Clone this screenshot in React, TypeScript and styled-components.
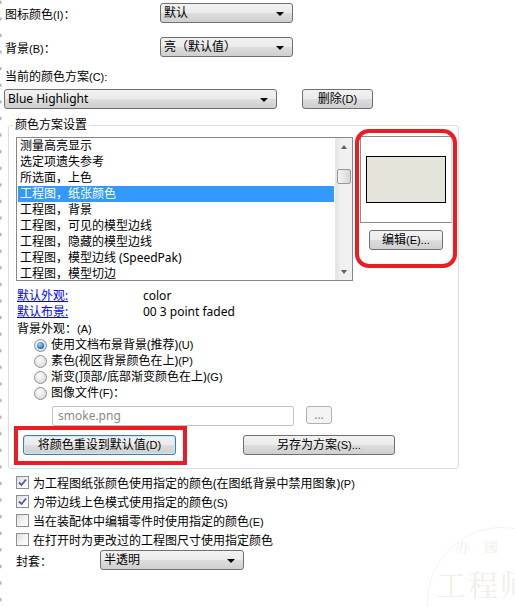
import React from "react";
import styled, { createGlobalStyle, css } from "styled-components";

const Global = createGlobalStyle`
  html, body { margin: 0; padding: 0; background: #fff; }
  body {
    font-family: "Noto Sans", "Noto Sans CJK SC", sans-serif;
    font-size: 12px;
    color: #000;
  }
  * { box-sizing: border-box; }
`;

const Page = styled.div`
  position: relative;
  width: 515px;
  height: 607px;
  overflow: hidden;
  padding-top: 3px;
  background-image: radial-gradient(circle at 0 50%, #b8b8b8 1.4px, transparent 2.2px);
  background-size: 4px 16.6px;
  background-repeat: repeat-y;
  background-position: 0 -6px;
`;

const Key = styled.span`
  font-family: "Liberation Sans", "Noto Sans CJK SC", sans-serif;
  font-size: 11px;
`;

const Row = styled.div<{ $mt?: number }>`
  display: flex;
  align-items: center;
  height: 20px;
  margin-top: ${(p) => p.$mt ?? 0}px;
`;

const RowLabel = styled.div<{ $w: number; $ml?: number }>`
  width: ${(p) => p.$w}px;
  margin-left: ${(p) => p.$ml ?? 5}px;
  white-space: nowrap;
  line-height: 20px;
  position: relative;
  top: 2px;
`;

const PlainLabel = styled.div<{ $mt: number }>`
  margin-left: 5px;
  margin-top: ${(p) => p.$mt}px;
  line-height: 18px;
  height: 18px;
`;

const win7Face = css`
  background: linear-gradient(#f2f2f2 0%, #ebebeb 48%, #dddddd 52%, #cfcfcf 100%);
  border: 1px solid #707070;
  border-radius: 3px;
`;

const SelectBox = styled.div<{ $w: number; $ml?: number }>`
  ${win7Face}
  width: ${(p) => p.$w}px;
  height: 20px;
  margin-left: ${(p) => p.$ml ?? 0}px;
  display: flex;
  align-items: center;
  padding-left: 3px;
  position: relative;
  white-space: nowrap;
  line-height: 18px;
  &::after {
    content: "";
    position: absolute;
    right: 8px;
    top: 8px;
    border-left: 4px solid transparent;
    border-right: 4px solid transparent;
    border-top: 4px solid #000;
  }
`;

const Button = styled.div<{ $w: number; $h?: number; $ml?: number; $mt?: number; $focus?: boolean; $disabled?: boolean }>`
  ${win7Face}
  width: ${(p) => p.$w}px;
  height: ${(p) => p.$h ?? 20}px;
  margin-left: ${(p) => p.$ml ?? 0}px;
  margin-top: ${(p) => p.$mt ?? 0}px;
  display: flex;
  align-items: center;
  justify-content: center;
  line-height: 18px;
  white-space: nowrap;
  position: relative;
  ${(p) =>
    p.$focus &&
    css`
      border-color: #3c7fb1;
      box-shadow: inset 0 0 0 1px #cbe7f7;
    `}
  ${(p) =>
    p.$disabled &&
    css`
      background: #f4f4f4;
      border-color: #adb2b5;
      color: #8a8a8a;
    `}
`;

const Annotated = styled.div<{ $t: number; $r: number; $b: number; $l: number; $radius: number }>`
  position: relative;
  &::after {
    content: "";
    position: absolute;
    top: ${(p) => -p.$t}px;
    right: ${(p) => -p.$r}px;
    bottom: ${(p) => -p.$b}px;
    left: ${(p) => -p.$l}px;
    border: 4px solid #ec1c24;
    border-radius: ${(p) => p.$radius}px;
    pointer-events: none;
  }
`;

const Group = styled.fieldset`
  margin: 8px 0 0 8px;
  width: 451px;
  min-width: 0;
  border: 1px solid #d5dfe5;
  border-radius: 3px;
  padding: 4px 0 13px 7px;
`;

const Legend = styled.legend`
  padding: 0 2px;
  margin-left: -3px;
  line-height: 16px;
  height: 16px;
`;

const TopArea = styled.div`
  display: flex;
  align-items: flex-start;
  gap: 7px;
`;

const ListBox = styled.div`
  width: 337px;
  height: 144px;
  border: 1px solid #828790;
  display: flex;
  overflow: hidden;
  background: #fff;
`;

const ListItems = styled.div`
  flex: 1;
  padding: 0 1px;
`;

const ListItem = styled.div<{ $sel?: boolean }>`
  height: 16px;
  line-height: 16px;
  padding-left: 2px;
  white-space: nowrap;
  background: ${(p) => (p.$sel ? "#3399ff" : "transparent")};
  color: ${(p) => (p.$sel ? "#fff" : "#000")};
`;

const ScrollBar = styled.div`
  width: 17px;
  background: linear-gradient(90deg, #e3e3e3, #f0f0f0 30%, #f0f0f0);
  border-left: 1px solid #e6e6e6;
  display: flex;
  flex-direction: column;
  align-items: center;
`;

const Arrow = styled.div<{ $down?: boolean }>`
  width: 0;
  height: 0;
  border-left: 3.5px solid transparent;
  border-right: 3.5px solid transparent;
  ${(p) =>
    p.$down
      ? css`
          border-top: 4px solid #606060;
          margin-top: auto;
          margin-bottom: 6px;
        `
      : css`
          border-bottom: 4px solid #606060;
          margin-top: 7px;
        `}
`;

const Thumb = styled.div`
  width: 14px;
  height: 15px;
  margin-top: 20px;
  border: 1px solid #979797;
  border-radius: 2px;
  background: linear-gradient(90deg, #f3f3f3, #e6e6e6 50%, #d6d6d6);
`;

const SwatchCol = styled.div`
  width: 92px;
  display: flex;
  flex-direction: column;
  align-items: center;
  margin-top: -1px;
`;

const SwatchPanel = styled.div`
  width: 92px;
  height: 87px;
  border: 1px solid #8c8c8c;
  border-right-color: #dcdcdc;
  display: flex;
  align-items: center;
  justify-content: center;
`;

const Swatch = styled.div`
  width: 80px;
  height: 47px;
  border: 1px solid #000;
  background: #e4e4da;
`;

const InfoRow = styled.div<{ $mt?: number }>`
  display: flex;
  height: 16px;
  line-height: 16px;
  margin-top: ${(p) => p.$mt ?? 0}px;
  margin-left: 1px;
`;

const Link = styled.span`
  width: 126px;
  color: #0000ff;
  text-decoration: underline;
`;

const RadioRow = styled.div`
  display: flex;
  align-items: center;
  height: 16px;
  line-height: 16px;
  padding-left: 18px;
  gap: 4px;
`;

const Radio = styled.span<{ $on?: boolean }>`
  width: 13px;
  height: 13px;
  border-radius: 50%;
  border: 1px solid #8e8f8f;
  background: radial-gradient(circle at 40% 35%, #ffffff, #dcdcdc 70%, #cfcfcf);
  display: inline-flex;
  align-items: center;
  justify-content: center;
  &::after {
    content: "";
    display: ${(p) => (p.$on ? "block" : "none")};
    width: 7px;
    height: 7px;
    border-radius: 50%;
    background: radial-gradient(circle at 40% 35%, #9fdcff, #2f78c8 60%, #1a4f93);
  }
`;

const FileRow = styled.div`
  display: flex;
  align-items: flex-start;
  margin-top: 5px;
  margin-left: 36px;
`;

const TextInput = styled.div`
  width: 242px;
  height: 20px;
  border: 1px solid #c2c2c2;
  border-radius: 2px;
  color: #8a8a8a;
  padding-left: 5px;
  line-height: 18px;
`;

const ButtonRow = styled.div`
  display: flex;
  margin-top: 9px;
  margin-left: 7px;
`;

const CheckList = styled.div`
  display: flex;
  flex-direction: column;
  margin-top: 4px;
  margin-left: 16px;
`;

const CheckRow = styled.div`
  display: flex;
  align-items: center;
  height: 19px;
  gap: 4px;
  white-space: nowrap;
`;

const Check = styled.span`
  width: 13px;
  height: 13px;
  border: 1px solid #8e8f8f;
  background: linear-gradient(135deg, #dcdcdc, #f6f6f6 60%, #ffffff);
  display: inline-flex;
  align-items: center;
  justify-content: center;
`;

const WrapRow = styled.div`
  display: flex;
  align-items: center;
  height: 20px;
  margin-top: 1px;
`;

const Watermark = styled.div`
  position: absolute;
  right: -62px;
  bottom: -70px;
  width: 150px;
  height: 150px;
  border-radius: 50%;
  border: 1px solid #f6f3f0;
  color: #f3eeea;
  font-family: "Noto Serif CJK SC", "Noto Sans CJK SC", serif;
  pointer-events: none;
`;

const WmBig = styled.div`
  position: absolute;
  left: 8px;
  top: 33px;
  font-size: 30px;
  letter-spacing: 2px;
  white-space: nowrap;
`;

const WmSmall = styled.div`
  position: absolute;
  left: 28px;
  top: 8px;
  font-size: 14px;
  letter-spacing: 14px;
  white-space: nowrap;
`;

const items = [
  "测量高亮显示",
  "选定项遗失参考",
  "所选面，上色",
  "工程图，纸张颜色",
  "工程图，背景",
  "工程图，可见的模型边线",
  "工程图，隐藏的模型边线",
  "工程图，模型边线 (SpeedPak)",
  "工程图，模型切边",
];

const CheckMark = () => (
  <svg width="9" height="9" viewBox="0 0 9 9">
    <path d="M1 4.5 L3.5 7 L8 1.5" fill="none" stroke="#4a5f97" strokeWidth="1.8" />
  </svg>
);

export default function App() {
  return (
    <>
      <Global />
      <Page>
        <Row>
          <RowLabel $w={155}>
            图标颜色<Key>(I)</Key>：
          </RowLabel>
          <SelectBox $w={133}>默认</SelectBox>
        </Row>
        <Row $mt={14}>
          <RowLabel $w={155}>
            背景<Key>(B)</Key>：
          </RowLabel>
          <SelectBox $w={133}>亮（默认值）</SelectBox>
        </Row>
        <PlainLabel $mt={11}>
          当前的颜色方案<Key>(C):</Key>
        </PlainLabel>
        <Row $mt={3}>
          <SelectBox $w={273} $ml={4}>
            Blue Highlight
          </SelectBox>
          <Button $w={71} $ml={25}>
            删除<Key>(D)</Key>
          </Button>
        </Row>

        <Group>
          <Legend>颜色方案设置</Legend>
          <TopArea>
            <ListBox>
              <ListItems>
                {items.map((t, i) => (
                  <ListItem key={t} $sel={i === 3}>
                    {t}
                  </ListItem>
                ))}
              </ListItems>
              <ScrollBar>
                <Arrow />
                <Thumb />
                <Arrow $down />
              </ScrollBar>
            </ListBox>
            <Annotated $t={8} $r={5} $b={18} $l={5} $radius={14}>
              <SwatchCol>
                <SwatchPanel>
                  <Swatch />
                </SwatchPanel>
                <Button $w={74} $mt={7}>
                  编辑<Key>(E)...</Key>
                </Button>
              </SwatchCol>
            </Annotated>
          </TopArea>

          <InfoRow $mt={7}>
            <Link>默认外观:</Link>
            <span>color</span>
          </InfoRow>
          <InfoRow>
            <Link>默认布景:</Link>
            <span>00 3 point faded</span>
          </InfoRow>
          <InfoRow $mt={1}>
            背景外观：<Key>(A)</Key>
          </InfoRow>
          <RadioRow>
            <Radio $on />
            <span>
              使用文档布景背景(推荐)<Key>(U)</Key>
            </span>
          </RadioRow>
          <RadioRow>
            <Radio />
            <span>
              素色(视区背景颜色在上)<Key>(P)</Key>
            </span>
          </RadioRow>
          <RadioRow>
            <Radio />
            <span>
              渐变(顶部/底部渐变颜色在上)<Key>(G)</Key>
            </span>
          </RadioRow>
          <RadioRow>
            <Radio />
            <span>
              图像文件<Key>(F)</Key>：
            </span>
          </RadioRow>
          <FileRow>
            <TextInput>smoke.png</TextInput>
            <Button $w={26} $h={18} $ml={12} $disabled>
              ...
            </Button>
          </FileRow>
          <ButtonRow>
            <Annotated $t={9} $r={11} $b={10} $l={9} $radius={0}>
              <Button $w={153} $focus>
                将颜色重设到默认值<Key>(D)</Key>
              </Button>
            </Annotated>
            <Button $w={152} $ml={67}>
              另存为方案<Key>(S)...</Key>
            </Button>
          </ButtonRow>
        </Group>

        <CheckList>
          <CheckRow>
            <Check>
              <CheckMark />
            </Check>
            <span>
              为工程图纸张颜色使用指定的颜色(在图纸背景中禁用图象)<Key>(P)</Key>
            </span>
          </CheckRow>
          <CheckRow>
            <Check>
              <CheckMark />
            </Check>
            <span>
              为带边线上色模式使用指定的颜色<Key>(S)</Key>
            </span>
          </CheckRow>
          <CheckRow>
            <Check />
            <span>
              当在装配体中编辑零件时使用指定的颜色<Key>(E)</Key>
            </span>
          </CheckRow>
          <CheckRow>
            <Check />
            <span>在打开时为更改过的工程图尺寸使用指定颜色</span>
          </CheckRow>
          <WrapRow>
            <RowLabel $w={84} $ml={0}>
              封套：
            </RowLabel>
            <SelectBox $w={144}>半透明</SelectBox>
          </WrapRow>
        </CheckList>

        <Watermark>
          <WmSmall>办國</WmSmall>
          <WmBig>工程师</WmBig>
        </Watermark>
      </Page>
    </>
  );
}
